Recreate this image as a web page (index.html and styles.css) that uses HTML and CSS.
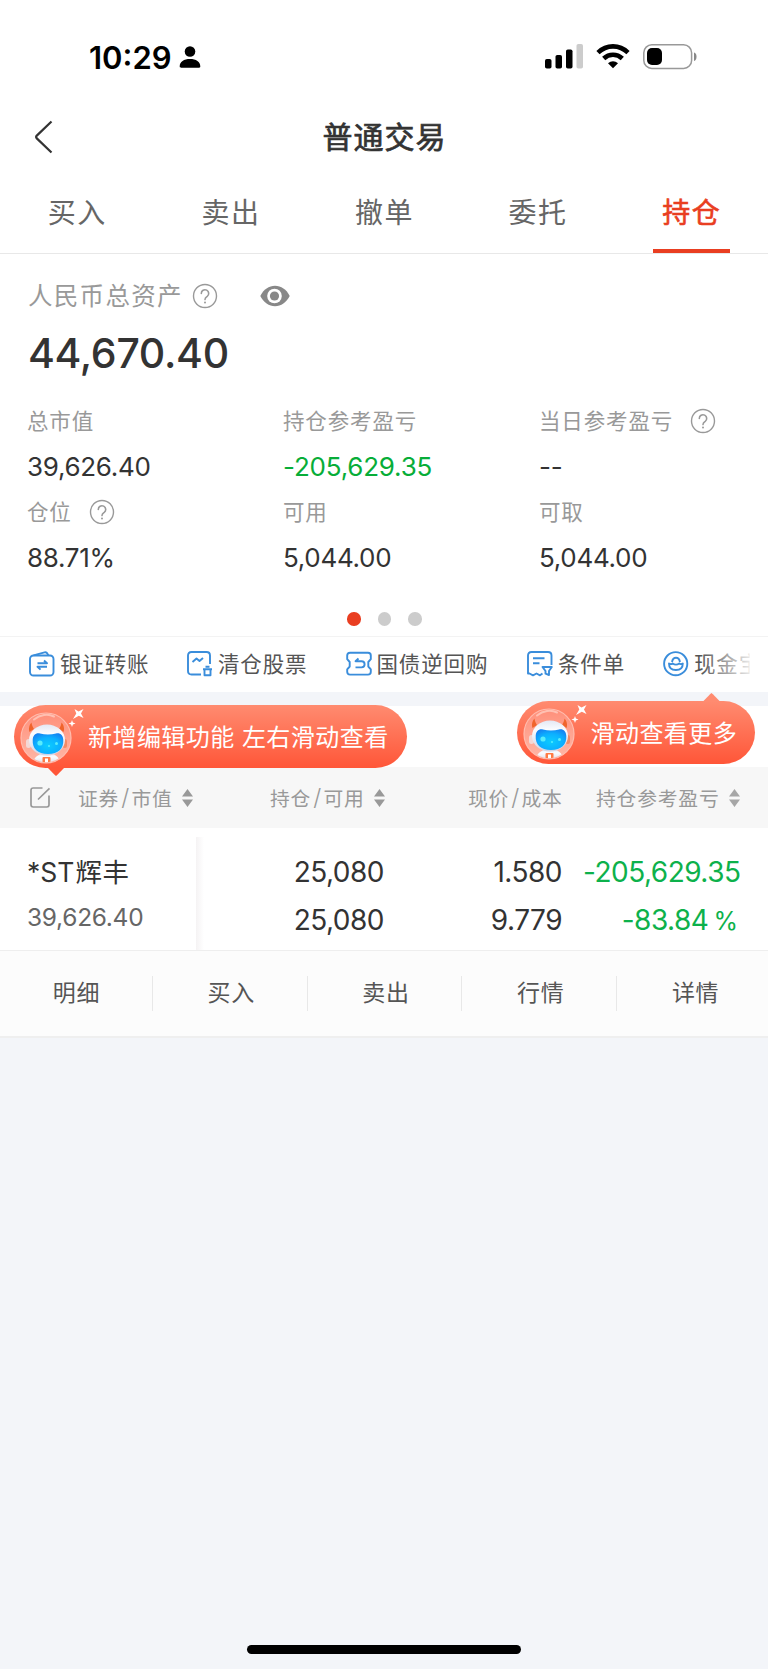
FILE: index.html
```html
<!DOCTYPE html>
<html lang="zh-CN">
<head>
<meta charset="utf-8">
<title>普通交易</title>
<link rel="stylesheet" href="styles.css">
</head>
<body>
<svg class="defs" width="0" height="0" aria-hidden="true">
  <defs>
    <radialGradient id="visor" cx=".5" cy=".6" r=".65"><stop offset="0" stop-color="#0cccff"/><stop offset=".6" stop-color="#0cb0ff"/><stop offset="1" stop-color="#1583f2"/></radialGradient>
    <linearGradient id="shell" x1="0" y1="0" x2="0" y2="1"><stop offset="0" stop-color="#e3e8f4"/><stop offset=".3" stop-color="#fbfcff"/><stop offset="1" stop-color="#cfd3e4"/></linearGradient>
    <linearGradient id="bubble" x1="0" y1="0" x2="0" y2="1"><stop offset="0" stop-color="#ff8f7a"/><stop offset=".5" stop-color="#ffa491"/><stop offset="1" stop-color="#ffb6a6"/></linearGradient>
    <clipPath id="dome"><circle cx="27" cy="32" r="24.2"/></clipPath>
    <symbol id="help" viewBox="0 0 26 26"><circle cx="13" cy="13" r="11.5" fill="none" stroke="#999" stroke-width="1.4"/><path d="M9.3 10.4a3.7 3.7 0 1 1 5.9 3c-1.500 1-2.200 1.700-2.200 3.200" fill="none" stroke="#999" stroke-width="1.6" stroke-linecap="round"/><circle cx="13" cy="19.600" r="1" fill="#999"/></symbol>
    <symbol id="sort" viewBox="0 0 11 18"><path d="M5.500 0 11 7.500H0zM0 10.500h11L5.500 18z" fill="#999"/></symbol>
    <symbol id="robot" viewBox="0 0 66 62">
      <circle cx="27" cy="32" r="25" fill="url(#bubble)" stroke="#ffbcae" stroke-width="1.200"/>
      <g clip-path="url(#dome)">
        <path d="M13 60c1-8 6-13 15-13s13 5 14 13z" fill="url(#shell)"/>
        <rect x="23.500" y="51" width="8" height="7" rx="1" fill="#ff7a44"/>
        <rect x="26" y="52.500" width="3" height="5" fill="#fff"/>
      </g>
      <path d="M10.500 26c-1.500-4 .5-8 2-9.500 .3 3 1.500 5 2.500 6.500zM44.500 26c1.500-4-.5-8-2-9.500-.3 3-1.500 5-2.500 6.500z" fill="#f0642c"/>
      <rect x="7" y="33" width="5" height="9" rx="2.500" fill="#f3d8d6"/><rect x="43.500" y="33" width="4.500" height="9" rx="2.200" fill="#f28a66"/>
      <ellipse cx="28" cy="34" rx="18" ry="15.500" fill="url(#shell)"/>
      <path d="M13.700 34c.3-5 3.300-7.500 7.300-6.500 5 1.200 11 1.200 16 0 4-1 7 1.500 7.300 6.500.5 8.500-5 14-15.300 14S13.200 42.500 13.700 34z" fill="url(#visor)"/>
      <circle cx="21" cy="37" r="2.600" fill="#59ecfb"/><circle cx="37.500" cy="37.500" r="1.500" fill="#59ecfb"/><circle cx="30" cy="40" r="1" fill="#59ecfb"/>
      <path d="M15 13.500c6-5 14-6 20-3" fill="none" stroke="#ffc0b2" stroke-width="2" stroke-linecap="round"/>
      <path d="M55.500 3 59.500 5.500 64.500 3 62 7.500 64.500 12 59.800 9.800 54 13 57.300 7.500z" fill="#fff"/>
      <path d="m53 14 .9 2.600 2.600.9-2.600.9L53 21l-.9-2.600-2.600-.9 2.600-.9z" fill="#fff"/>
    </symbol>
  </defs>
</svg>

<main class="screen">
  <div class="status">
    <span class="clock">10:29</span>
    <svg class="person" viewBox="0 0 22 24"><circle cx="11" cy="6.500" r="5.300"/><path d="M.7 21.500C.7 16.500 5 14 11 14s10.300 2.500 10.300 7.500c0 .8-.5 1.200-1.300 1.200H2c-.8 0-1.300-.4-1.300-1.200z"/></svg>
    <svg class="signal" viewBox="0 0 38 25"><rect y="15" width="6.500" height="9.500" rx="1.800"/><rect x="10.500" y="11" width="6.500" height="13.500" rx="1.800"/><rect x="21" y="5.500" width="6.500" height="19" rx="1.800"/><rect x="31.500" y="0" width="6.500" height="24.500" rx="1.800" fill="#ccc"/></svg>
    <svg class="wifi" viewBox="0 0 34 25"><path d="M2 8.600C10.500.3 23.500.3 32 8.600M7.700 14.500c5.300-5 13.300-5 18.600 0" fill="none" stroke="#000" stroke-width="4.600"/><path d="M12 19.300c3-2.700 7-2.700 10 0l-5 5z"/></svg>
    <svg class="battery" viewBox="0 0 55 26"><rect x=".8" y=".8" width="47.800" height="23.600" rx="8" fill="none" stroke="#999" stroke-width="1.500"/><rect x="4" y="4" width="15" height="17" rx="5"/><path d="M51 8.500c3.400 1 3.400 7.500 0 8.500z" fill="#888"/></svg>
  </div>

  <header class="navbar">
    <svg class="back" viewBox="0 0 20 34"><path d="M17.500 1.500 2.800 15.600q-1.300 1.400 0 2.800L17.500 32.500" fill="none" stroke="#333" stroke-width="2.200"/></svg>
    <h1 class="title">普通交易</h1>
  </header>

  <nav class="tabs">
    <a class="tab">买入</a><a class="tab">卖出</a><a class="tab">撤单</a><a class="tab">委托</a><a class="tab active">持仓</a>
  </nav>

  <section class="assets">
    <div class="total-label"><span>人民币总资产</span><svg class="help"><use href="#help"/></svg>
      <svg class="eye" viewBox="0 0 30 22"><path d="M.3 11C3.500 4.500 9 .8 15 .8S26.500 4.500 29.700 11C26.500 17.500 21 21.200 15 21.200S3.500 17.500.3 11z" fill="#888"/><circle cx="14.500" cy="11" r="7.300" fill="#fff"/><circle cx="14.500" cy="11" r="4.600" fill="#888"/></svg>
    </div>
    <div class="total">44,670.40</div>
    <div class="stats">
      <div class="label"><span>总市值</span></div>
      <div class="label"><span>持仓参考盈亏</span></div>
      <div class="label"><span>当日参考盈亏</span><svg class="help"><use href="#help"/></svg></div>
      <div class="value">39,626.40</div>
      <div class="value down">-205,629.35</div>
      <div class="value">--</div>
      <div class="label"><span>仓位</span><svg class="help"><use href="#help"/></svg></div>
      <div class="label"><span>可用</span></div>
      <div class="label"><span>可取</span></div>
      <div class="value">88.71%</div>
      <div class="value">5,044.00</div>
      <div class="value">5,044.00</div>
    </div>
    <div class="dots"><i class="dot on"></i><i class="dot"></i><i class="dot"></i></div>
  </section>

  <section class="shortcuts">
    <a class="shortcut s1"><svg viewBox="0 0 26 26"><rect x="1" y="4.500" width="23.500" height="20" rx="3.500"/><path d="m4.500 4.300 11-3q2-.5 2.800 1.200l1 1.800"/><path d="M8.500 12.300h9.500l-3-2.800M18 15.800H8.500l3 2.800"/></svg><span>银证转账</span></a>
    <a class="shortcut s2"><svg viewBox="0 0 26 26"><path d="M14 23.500H4.500Q1 23.500 1 20V4.500Q1 1 4.500 1h15Q23 1 23 4.500V13"/><path d="m5.500 11 4-3.500 3 2.500 3.500-3"/><path d="M16 18.300h9M18.500 15.700h4M17.500 18.500v5.700h6v-5.700"/></svg><span>清仓股票</span></a>
    <a class="shortcut s3"><svg viewBox="0 0 26 26"><path d="M4 1.800h18q2.800 0 2.800 2.800v3.600L22.300 11v4.500l2.500 2.800v2.500q0 2.800-2.800 2.800H4q-2.800 0-2.800-2.800v-2.500l2.500-2.800V11L1.200 8.200V4.600Q1.200 1.800 4 1.800z"/><path d="M12.500 7.500 9.500 10.200h6a3 3 0 0 1 0 6.200H9.500"/></svg><span>国债逆回购</span></a>
    <a class="shortcut s4"><svg viewBox="0 0 26 26"><path d="M15.500 22.500 13 24.300l-3.500-1.800-3.500 1.800-3.500-1.800H1V4.500Q1 1 4.500 1H21q3.500 0 3.500 3.500V14"/><path d="M6 7.300h11.500M6 12.200h6.500"/><path d="M15.500 16h9.300l-2.800 4v4l-3.500-1.300V20z"/></svg><span>条件单</span></a>
    <a class="shortcut s5"><svg viewBox="0 0 26 26"><circle cx="12.700" cy="12.700" r="11.600"/><path d="M6 12.500q2.200 1.200 3.600 0 3.400 2.200 6.600 0 1.600 1.200 3.600 0 0 6.500-6.900 6.500T6 12.500zM9 11q.8-4.200 4-4.200t4 4.200"/></svg><span>现金宝</span></a>
    <div class="fade"></div>
  </section>

  <div class="gap">
    <div class="tip tip-left"><svg class="robot"><use href="#robot"/></svg><span>新增编辑功能 左右滑动查看</span></div>
    <div class="tip tip-right"><svg class="robot"><use href="#robot"/></svg><span>滑动查看更多</span></div>
  </div>

  <section class="holdings">
    <div class="thead">
      <div class="th th1"><svg class="edit" viewBox="0 0 21 21"><path d="M12.500 1H3.200Q1 1 1 3.200v14.600Q1 20 3.200 20h13.600q2.200 0 2.200-2.200V8.500M8 12.500 19.500 1.300" fill="none" stroke="#999" stroke-width="1.700"/></svg><span>证券<b>/</b>市值</span><svg class="sort"><use href="#sort"/></svg></div>
      <div class="th th2"><span>持仓<b>/</b>可用</span><svg class="sort"><use href="#sort"/></svg></div>
      <div class="th th3"><span>现价<b>/</b>成本</span></div>
      <div class="th th4"><span>持仓参考盈亏</span><svg class="sort faded"><use href="#sort"/></svg></div>
    </div>
    <div class="row">
      <div class="cell name"><div class="big"><span class="st">*ST</span>辉丰</div><div class="sub">39,626.40</div></div>
      <div class="cell qty"><div class="big">25,080</div><div class="big">25,080</div></div>
      <div class="cell price"><div class="big">1.580</div><div class="big">9.779</div></div>
      <div class="cell pnl down"><div class="big">-205,629.35</div><div class="big pct">-83.84<span>%</span></div></div>
    </div>
    <div class="actions"><a>明细</a><a>买入</a><a>卖出</a><a>行情</a><a>详情</a></div>
  </section>

  <footer class="home"><div class="home-bar"></div></footer>
</main>
</body>
</html>
```
FILE: styles.css
```css
* { box-sizing: border-box; }
body {
  margin: 0;
  font-family: Inter, "Noto Sans CJK SC", sans-serif;
  color: #333;
  background: #f3f5f9;
}
svg { display: block; flex: none; }
.defs { position: absolute; }
.screen { display: flex; flex-direction: column; width: 768px; height: 1669px; overflow: hidden; }

.status { display: flex; height: 106px; padding: 44px 0 0 89px; background: #fff; }
.clock { width: 90px; height: 26px; font-size: 31px; font-weight: 600; line-height: 27px; letter-spacing: 0; color: #000; }
.person { width: 22px; height: 24px; margin-top: 1px; }
.signal { width: 38px; height: 25px; margin-left: 344px; }
.wifi { width: 34px; height: 25px; margin-left: 13px; }
.battery { width: 55px; height: 26px; margin-left: 13px; }

.navbar { display: flex; align-items: center; height: 62px; padding-left: 34px; background: #fff; }
.back { width: 20px; height: 34px; }
.title { flex: 1; margin: 0; padding: 0 53px 4px 0; text-align: center; font-size: 30px; font-weight: 400; letter-spacing: 1px; -webkit-text-stroke: 0.7px #333; }

.tabs { display: flex; height: 86px; border-bottom: 1.500px solid #e8e8e8; background: #fff; }
.tab { position: relative; flex: 1; text-align: center; font-size: 28px; line-height: 90px; letter-spacing: 1.500px; text-indent: 1px; color: #666; }
.tab.active { color: #e93e21; -webkit-text-stroke: 0.6px #e93e21; }
.tab.active::after { content: ""; position: absolute; left: 38.500px; bottom: 0; width: 77px; height: 4.500px; background: #e93e21; }

.assets { height: 382px; background: #fff; }
.total-label { display: flex; align-items: center; height: 48px; margin-top: 18px; padding-left: 28px; font-size: 24.500px; letter-spacing: 1.300px; color: #999; }
.total-label span { padding-bottom: 4px; }
.help { width: 26px; height: 26px; }
.total-label .help { margin: 0 0 1px 9px; }
.eye { width: 30px; height: 22px; margin: 0 0 1px 42px; }
.total { height: 66px; padding-left: 28px; font-size: 41px; font-weight: 500; line-height: 67px; letter-spacing: -0.300px; }
.stats { display: grid; grid-template-columns: 256px 256px 256px; grid-template-rows: 46px 45px 46px 45px; margin-top: 12px; padding-left: 27px; }
.label { display: flex; align-items: center; font-size: 21.500px; letter-spacing: 0.850px; color: #999; }
.label span { padding-bottom: 3px; }
.label .help { margin-left: 17px; }
.value { display: flex; align-items: center; font-size: 26px; letter-spacing: -0.300px; }
.down { color: #0db14b; }
.value.down { color: #07ad38; letter-spacing: -0.200px; }
.dots { display: flex; justify-content: center; gap: 17px; margin-top: 32px; padding-left: 1px; }
.dot { width: 13.500px; height: 13.500px; border-radius: 50%; background: #ccc; }
.dot.on { background: #e93e21; }

.shortcuts { position: relative; display: flex; height: 56px; overflow: hidden; border-top: 1px solid #f3f3f3; background: #fff; }
.shortcut { display: flex; align-items: center; gap: 5px; flex: none; font-size: 21.500px; letter-spacing: 0.850px; white-space: nowrap; color: #555; }
.shortcut span { padding-bottom: 4px; }
.shortcut svg { width: 26px; height: 26px; margin-bottom: 2px; fill: none; stroke: #3a8ddb; stroke-width: 1.900; stroke-linejoin: round; }
.s1 { width: 158px; margin-left: 29px; }
.s2 { width: 158.500px; }
.s3 { width: 181.500px; }
.s4 { width: 136px; }
.fade { position: absolute; right: 0; top: 0; width: 68px; height: 55px; background: linear-gradient(90deg, rgba(255,255,255,0), rgba(255,255,255,0.85) 49px, #fff 50px); }

.gap { position: relative; height: 75px; border-top: 14px solid #f3f5f9; background: #fff; }
.tip { position: absolute; z-index: 1; display: flex; align-items: center; height: 63px; border-radius: 32px; color: #fff; font-size: 24px; letter-spacing: 0.450px; white-space: pre; background: linear-gradient(#ff8b70, #ff5638); }
.tip::after { content: ""; position: absolute; width: 18px; height: 9px; }
.tip-left { left: 14px; top: -1px; width: 393px; }
.tip-left::after { left: 33px; top: 62px; background: #ff5638; clip-path: polygon(0 0, 100% 0, 58% 85%, 50% 100%, 42% 85%); }
.tip-right { left: 516.500px; top: -5px; width: 238px; }
.tip-right::after { left: 186px; top: -8px; background: #ff8b70; clip-path: polygon(0 100%, 100% 100%, 58% 15%, 50% 0, 42% 15%); }
.robot { width: 66px; height: 62px; margin-left: 5px; }
.tip span { margin-left: 3px; padding-bottom: 3px; }

.thead { display: flex; height: 61px; background: #f7f7f7; }
.th { display: flex; align-items: center; font-size: 19.800px; letter-spacing: 0.800px; color: #999; white-space: nowrap; }
.th span { padding-bottom: 1px; }
.th b { padding: 0 1.500px 0 2px; font-size: 23px; font-weight: 300; }
.sort { width: 11px; height: 18px; margin-left: 9px; }
.sort.faded { opacity: 0.85; }
.edit { width: 21px; height: 21px; margin-right: 27px; }
.th1 { width: 240px; padding-left: 30px; }
.th2 { width: 197px; padding-left: 30px; }
.th3 { width: 159px; padding-left: 31px; }

.row { display: flex; height: 123px; border-bottom: 1px solid #eee; background: #fff; }
.cell { display: flex; flex-direction: column; padding-top: 19.500px; text-align: right; }
.big { height: 48px; font-size: 28px; line-height: 48px; letter-spacing: -0.500px; white-space: nowrap; }
.name { position: relative; width: 196px; padding-left: 27px; text-align: left; }
.name::after { content: ""; position: absolute; left: 196px; top: 9px; width: 8px; height: 113px; background: linear-gradient(90deg, #f5f3f4, #fff); }
.name .big { font-size: 26.500px; letter-spacing: 0.500px; }
.st { margin-right: 1px; letter-spacing: 0; }
.sub { font-size: 24.500px; line-height: 43px; letter-spacing: -0.300px; color: #666; }
.qty { width: 188px; }
.price { width: 178px; }
.pnl { width: 178.500px; }
.pct { padding-right: 3px; }
.pct span { margin-left: 5px; font-size: 25px; }

.actions { display: flex; width: 774px; height: 87px; margin-left: -3px; align-items: center; border-bottom: 2px solid #efefef; background: #fcfcfc; }
.actions a { flex: 1; height: 35px; border-left: 1px solid #e8e8e8; text-align: center; text-indent: 3px; font-size: 23px; line-height: 35px; letter-spacing: 0.700px; color: #555; }

.home { display: flex; justify-content: center; margin-top: auto; padding-bottom: 15px; }
.home-bar { width: 274px; height: 9px; border-radius: 5px; background: #000; }
```
